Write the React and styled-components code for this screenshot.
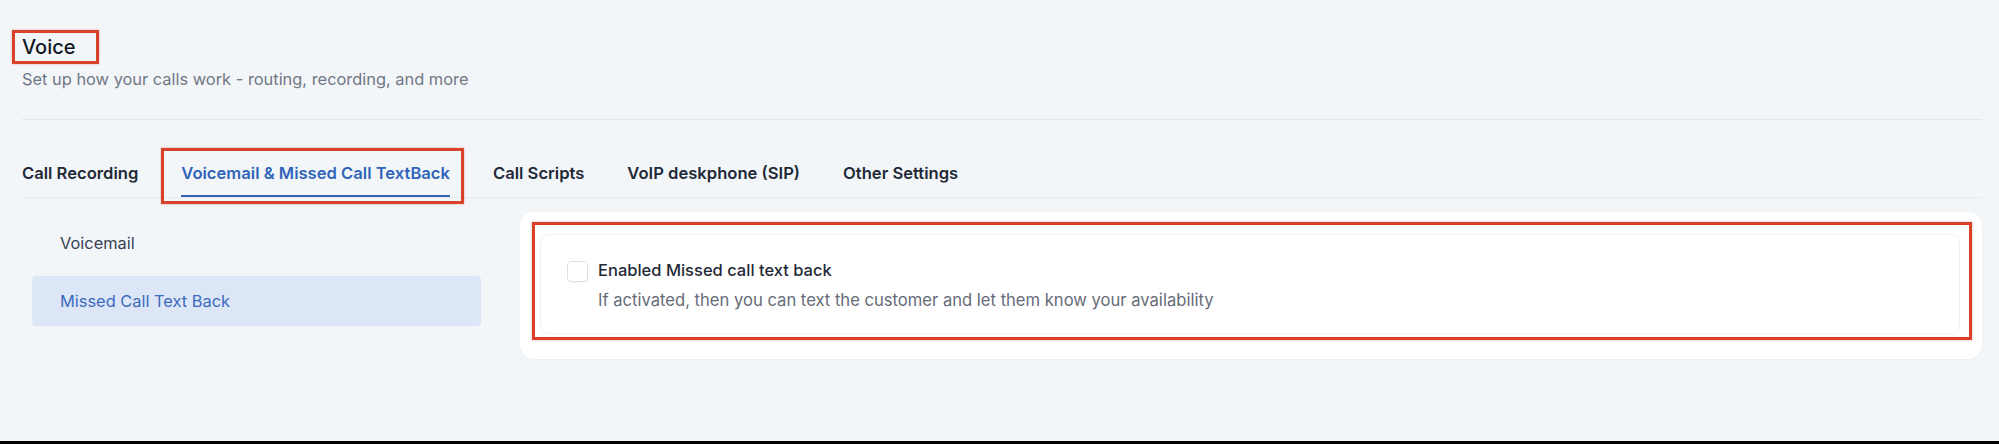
import React from "react";
import styled, { createGlobalStyle } from "styled-components";

const GlobalStyle = createGlobalStyle`
  body {
    margin: 0;
    background: #f3f6f9;
    font-family: Inter, "Noto Sans", sans-serif;
  }
`;

const Page = styled.div`
  box-sizing: border-box;
  height: 444px;
  padding: 35px 17px 0 22px;
  background: #f3f6f9;
  border-bottom: 3px solid #000;
  overflow: hidden;
`;

// red highlight drawn over an element, offsets are how far it sticks out
const Marked = styled.div`
  position: relative;
  display: ${(p) => (p.$inline ? "inline-block" : "block")};
  &::after {
    content: "";
    position: absolute;
    top: ${(p) => -p.$t}px;
    right: ${(p) => -p.$r}px;
    bottom: ${(p) => -p.$b}px;
    left: ${(p) => -p.$l}px;
    border: 3px solid #d8412a;
    box-shadow: 0 0 2px rgba(216, 65, 42, 0.45);
    pointer-events: none;
  }
`;

const Title = styled.h1`
  margin: 0;
  font-size: 20px;
  line-height: 24px;
  font-weight: 500;
  color: #111827;
`;

const Subtitle = styled.p`
  margin: 10px 0 0;
  font-size: 16.4px;
  line-height: 20px;
  color: #717784;
`;

const Divider = styled.hr`
  margin: 30px 0 0;
  border: 0;
  border-top: 1px solid #e3e7ec;
`;

const TabBar = styled.div`
  display: flex;
  gap: 43px;
  margin-top: 41px;
  border-bottom: 1px solid #e6eaef;
`;

const Tab = styled.div`
  padding-bottom: 10px;
  font-size: 16.6px;
  line-height: 24px;
  font-weight: 600;
  color: ${(p) => (p.$active ? "#2f64b8" : "#1f2937")};
  border-bottom: 2px solid ${(p) => (p.$active ? "#2f64b8" : "transparent")};
  white-space: nowrap;
`;

const Content = styled.div`
  display: flex;
  align-items: flex-start;
  gap: 39px;
  margin-top: 14px;
`;

const Sidebar = styled.div`
  width: 449px;
  margin-left: 10px;
  padding-top: 6px;
  display: flex;
  flex-direction: column;
  gap: 8px;
`;

const SideItem = styled.div`
  height: 50px;
  display: flex;
  align-items: center;
  padding-left: 28px;
  border-radius: 4px;
  font-size: 16.4px;
  color: ${(p) => (p.$active ? "#3a6bbd" : "#374151")};
  background: ${(p) => (p.$active ? "#dde6f6" : "transparent")};
`;

const Card = styled.div`
  flex: 1;
  background: #fff;
  border-radius: 14px;
  padding: 22px 22px 25px 20px;
  box-shadow: 0 1px 2px rgba(15, 23, 42, 0.04);
`;

const Option = styled.div`
  display: flex;
  align-items: flex-start;
  gap: 10px;
  padding: 25px 26px 23px;
  border: 1px solid #f0f2f5;
  border-radius: 8px;
`;

const Checkbox = styled.span`
  flex: none;
  box-sizing: border-box;
  width: 21px;
  height: 21px;
  margin-top: 1px;
  border: 1px solid #dde1e6;
  border-radius: 4px;
  background: #fff;
  box-shadow: 0 1px 1px rgba(0, 0, 0, 0.04);
`;

const OptionText = styled.div`
  display: flex;
  flex-direction: column;
  gap: 10px;
`;

const OptionLabel = styled.div`
  font-size: 16.5px;
  line-height: 20px;
  font-weight: 500;
  color: #1f2937;
`;

const OptionHint = styled.div`
  font-size: 16.6px;
  line-height: 20px;
  color: #666c78;
`;

const tabs = [
  "Call Recording",
  "Voicemail & Missed Call TextBack",
  "Call Scripts",
  "VoIP deskphone (SIP)",
  "Other Settings",
];

export default function App() {
  return (
    <>
      <GlobalStyle />
      <Page>
        <Marked $inline $t={5} $r={23} $b={5} $l={10}>
          <Title>Voice</Title>
        </Marked>
        <Subtitle>Set up how your calls work - routing, recording, and more</Subtitle>
        <Divider />
        <TabBar>
          {tabs.map((t, i) =>
            i === 1 ? (
              <Marked key={t} $t={13} $r={14} $b={7} $l={20}>
                <Tab $active>{t}</Tab>
              </Marked>
            ) : (
              <Tab key={t}>{t}</Tab>
            )
          )}
        </TabBar>
        <Content>
          <Sidebar>
            <SideItem>Voicemail</SideItem>
            <SideItem $active>Missed Call Text Back</SideItem>
          </Sidebar>
          <Card>
            <Marked $t={12} $r={12} $b={6} $l={8}>
              <Option>
                <Checkbox />
                <OptionText>
                  <OptionLabel>Enabled Missed call text back</OptionLabel>
                  <OptionHint>
                    If activated, then you can text the customer and let them know your availability
                  </OptionHint>
                </OptionText>
              </Option>
            </Marked>
          </Card>
        </Content>
      </Page>
    </>
  );
}
